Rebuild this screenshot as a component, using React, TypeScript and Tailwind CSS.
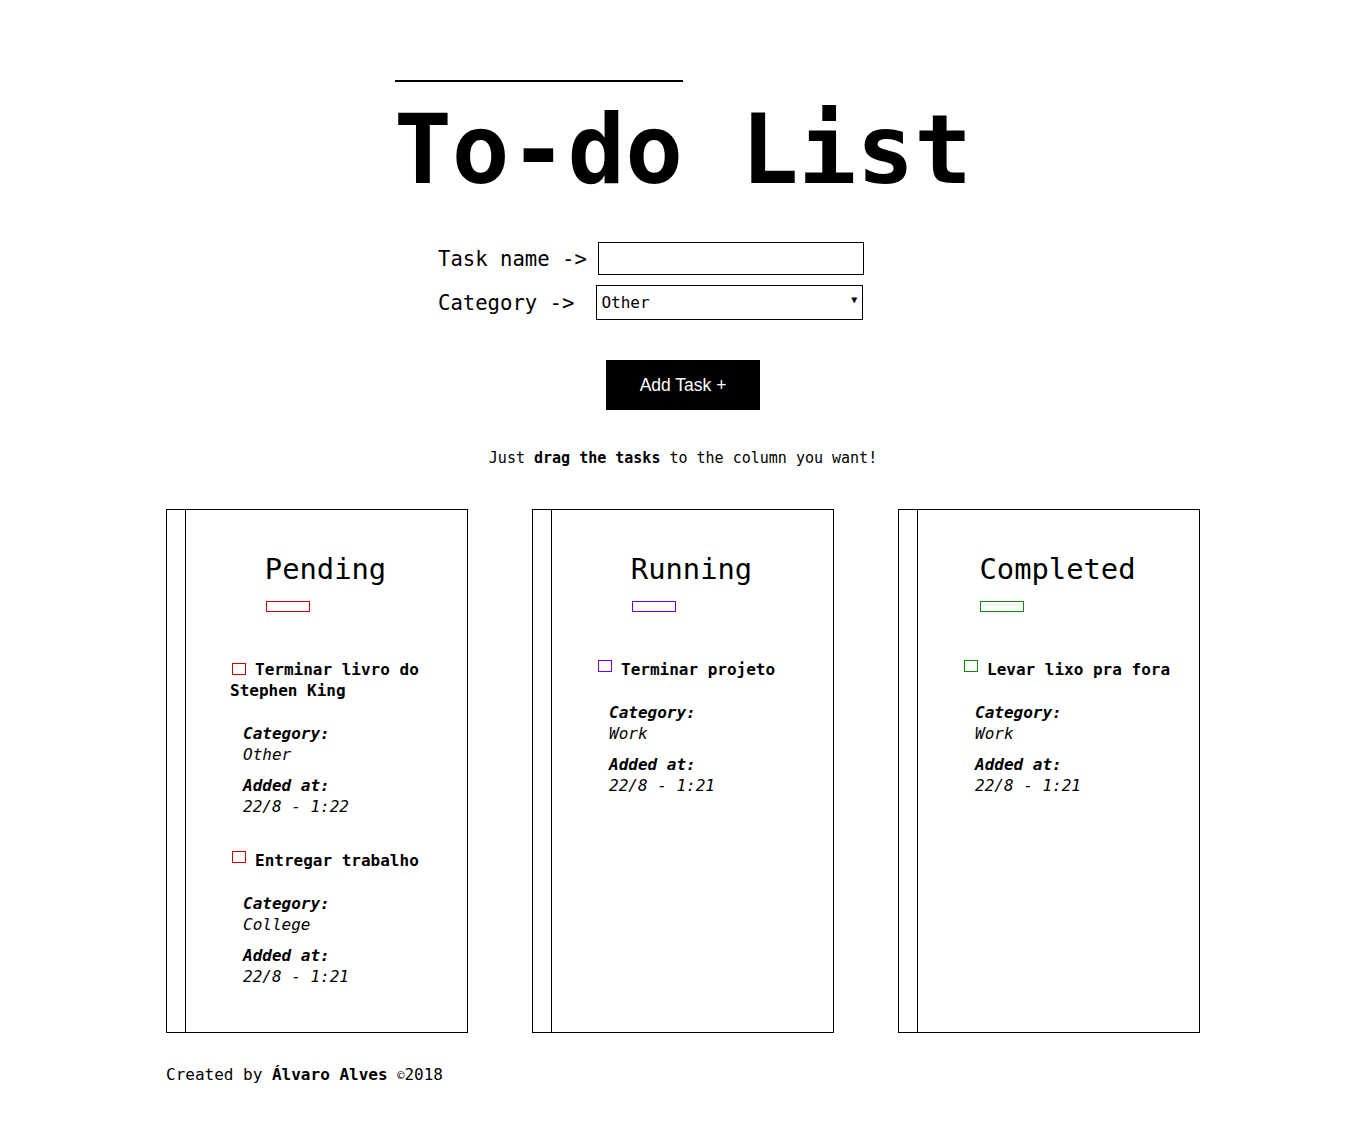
import React from "react";

type Task = { title: string; category: string; added: string; boxOffset?: boolean };

const columns: { name: string; borderClass: string; tasks: Task[] }[] = [
  {
    name: "Pending",
    borderClass: "border-[#cc0000]",
    tasks: [
      { title: "Terminar livro do Stephen King", category: "Other", added: "22/8 - 1:22" },
      { title: "Entregar trabalho", category: "College", added: "22/8 - 1:21", boxOffset: true },
    ],
  },
  {
    name: "Running",
    borderClass: "border-[#6a00ff]",
    tasks: [{ title: "Terminar projeto", category: "Work", added: "22/8 - 1:21", boxOffset: true }],
  },
  {
    name: "Completed",
    borderClass: "border-[#118811]",
    tasks: [{ title: "Levar lixo pra fora", category: "Work", added: "22/8 - 1:21", boxOffset: true }],
  },
];

function TaskItem({ task, borderClass, first }: { task: Task; borderClass: string; first: boolean }) {
  return (
    <div className={first ? "" : "mt-[33px]"}>
      <div className="text-[16px] leading-[21px] font-bold pr-[10px]">
        <span
          className={`inline-block w-[14px] h-[12px] border ${borderClass} ml-[2px] mr-[9px] ${
            task.boxOffset ? "relative -top-[3px]" : ""
          }`}
        />
        {task.title}
      </div>
      <div className="ml-[13px] mt-[22px] text-[16px] leading-[21px] italic">
        <div className="font-bold">Category:</div>
        <div>{task.category}</div>
        <div className="font-bold mt-[10px]">Added at:</div>
        <div>{task.added}</div>
      </div>
    </div>
  );
}

export default function App() {
  return (
    <div className="min-h-[1134px] bg-white text-black font-['DejaVu_Sans_Mono',monospace]">
      <div className="pt-[80px] flex flex-col items-center">
        <div>
          <div className="ml-[1px] w-[288px] h-[2px] bg-black" />
          <h1 className="mt-[20px] text-[96px] leading-[96px] font-bold whitespace-pre">To-do List</h1>
        </div>
      </div>

      <div className="w-[490px] mx-auto mt-[44px]">
        <div className="flex items-center h-[33px]">
          <span className="relative top-[1px] text-[20.6px] whitespace-pre">Task name -&gt;</span>
          <input
            type="text"
            className="ml-[11px] w-[266px] h-[33px] border border-black outline-none px-1"
          />
        </div>
        <div className="flex items-center h-[35px] mt-[10px]">
          <span className="relative top-[1px] text-[20.6px] whitespace-pre">Category -&gt;</span>
          <div className="ml-[22px] relative w-[267px] h-[35px] border border-black flex items-center">
            <span className="pl-[4px] pt-[1px] text-[16px] leading-[20px]">Other</span>
            <span className="absolute right-[5px] top-[8px] text-[10px] leading-[12px]">▼</span>
          </div>
        </div>
      </div>

      <div className="flex justify-center mt-[40px]">
        <button className="w-[154px] h-[50px] bg-black text-white text-[17.5px] font-['Liberation_Sans',Arial,sans-serif] flex items-center justify-center">
          Add Task +
        </button>
      </div>

      <p className="mt-[38px] text-center text-[15px] leading-[20px]">
        Just <b>drag the tasks</b> to the column you want!
      </p>

      <div className="w-[1034px] mx-auto">
        <div className="mt-[41px] flex gap-[64px]">
          {columns.map((col) => (
            <div key={col.name} className="w-[302px] h-[524px] border border-black flex">
              <div className="w-[19px] border-r border-black" />
              <div className="flex-1 pt-[42px]">
                <div className="flex justify-center">
                  <div className="mr-[2px]">
                    <h2 className="text-[28.8px] leading-[34px]">{col.name}</h2>
                    <div className={`mt-[15px] ml-[1px] w-[44px] h-[11px] border ${col.borderClass}`} />
                  </div>
                </div>
                <div className="pl-[44px] mt-[47px]">
                  {col.tasks.map((t, i) => (
                    <TaskItem key={t.title} task={t} borderClass={col.borderClass} first={i === 0} />
                  ))}
                </div>
              </div>
            </div>
          ))}
        </div>

        <p className="mt-[32px] text-[16px] leading-[20px] pb-[50px]">
          Created by <b>Álvaro Alves</b> <span className="text-[12px]">©</span>2018
        </p>
      </div>
    </div>
  );
}
